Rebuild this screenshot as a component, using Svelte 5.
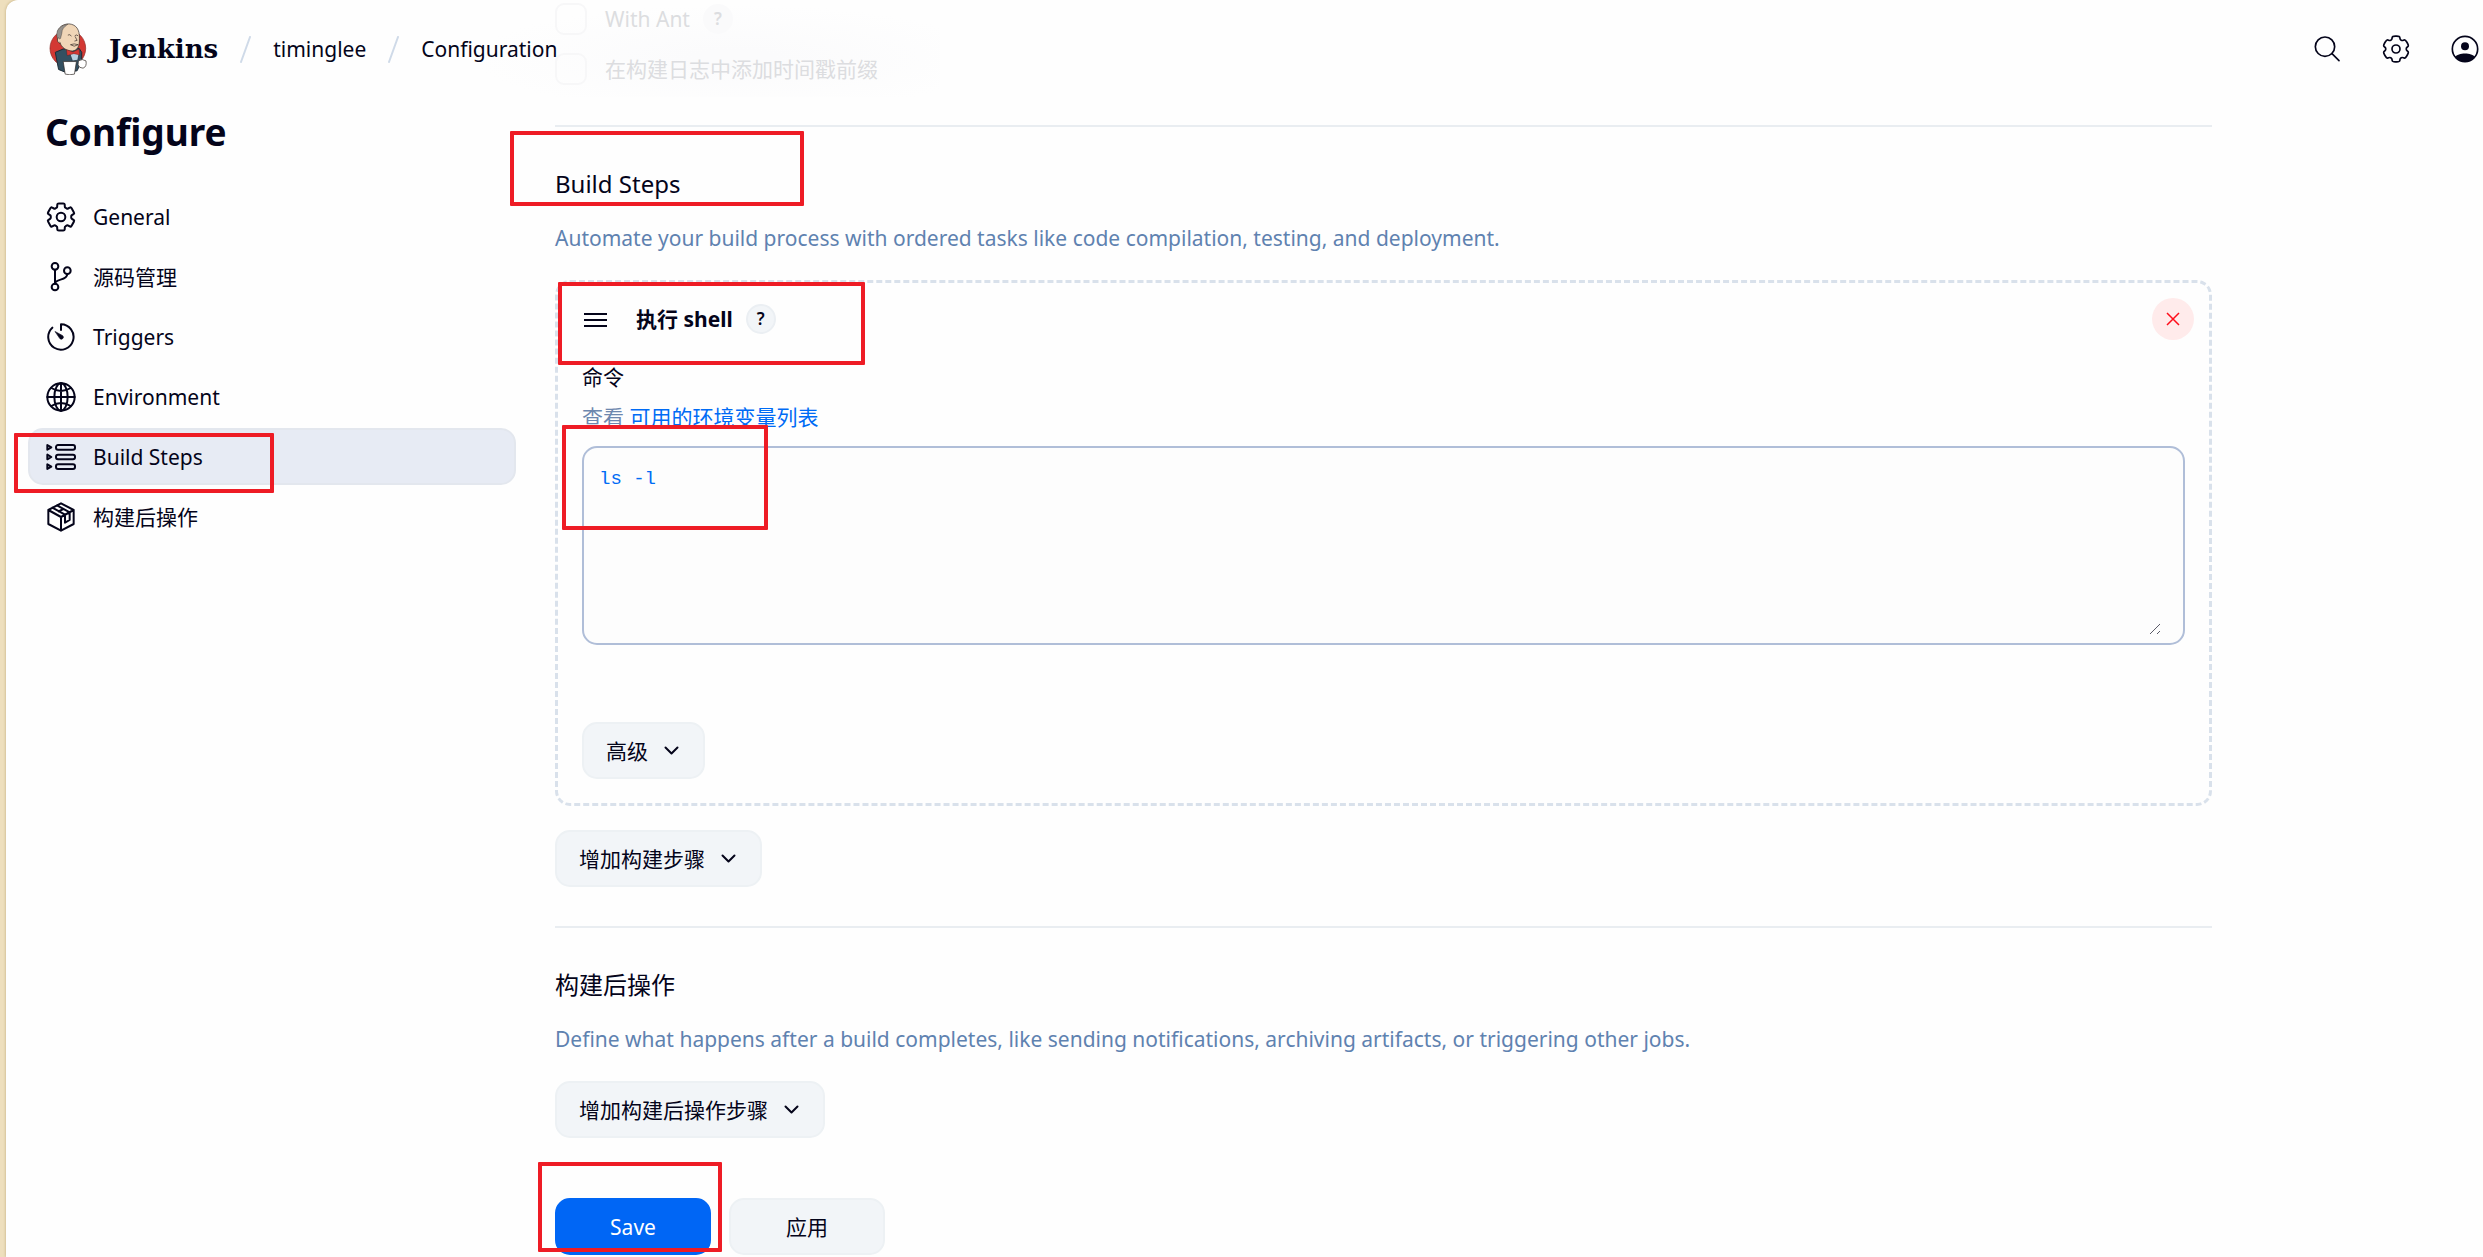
<script>
  let command = $state('ls -l');
  let withAnt = $state(false);
  let timestamps = $state(false);

  const tasks = [
    { icon: 'gear', label: 'General', id: 'general' },
    { icon: 'branch', label: '源码管理', id: 'scm' },
    { icon: 'timer', label: 'Triggers', id: 'triggers' },
    { icon: 'globe', label: 'Environment', id: 'environment' },
    { icon: 'steps', label: 'Build Steps', id: 'build-steps', active: true },
    { icon: 'cube', label: '构建后操作', id: 'post-build' }
  ];

  // Outline of a six-toothed gear around (45, 45), with rounded corners.
  function gearPath(outer, inner, outerAngle, innerAngle, round) {
    const points = [];
    for (let k = 0; k < 6; k++) {
      for (const [r, a] of [[inner, -innerAngle], [outer, -outerAngle], [outer, outerAngle], [inner, innerAngle]]) {
        const t = ((k * 60 + a) * Math.PI) / 180;
        points.push([45 + r * Math.sin(t), 45 - r * Math.cos(t)]);
      }
    }
    const mix = (p, q, f) => `${(p[0] + (q[0] - p[0]) * f).toFixed(1)} ${(p[1] + (q[1] - p[1]) * f).toFixed(1)}`;
    return (
      points
        .map((p, i) => {
          const prev = points[(i + points.length - 1) % points.length];
          const next = points[(i + 1) % points.length];
          return `${i ? 'L' : 'M'}${mix(p, prev, round)}Q${mix(p, p, 0)} ${mix(p, next, round)}`;
        })
        .join('') + 'Z'
    );
  }
  const sideGear = gearPath(42, 31, 15, 22, 0.2);
  const headGear = gearPath(40, 31, 16, 23, 0.4);
</script>

{#snippet icon(name)}
  <svg class="icon" viewBox="0 0 90 90" aria-hidden="true">
    {#if name === 'gear'}
      <path d={sideGear} />
      <circle cx="45" cy="45" r="13" />
    {:else if name === 'gear-soft'}
      <path d={headGear} />
      <circle cx="45" cy="45" r="12" />
    {:else if name === 'branch'}
      <circle cx="27" cy="13" r="10" />
      <circle cx="64" cy="26" r="10" />
      <circle cx="27" cy="75" r="10" />
      <path d="M27 23V65M64 36C63 58 28 48 27 65" />
    {:else if name === 'timer'}
      <path d="M19 17A38 38 0 1 0 45 7V24" />
      <path class="solid" d="M28 29L50 41A6 6 0 0 1 42 50Z" />
    {:else if name === 'globe'}
      <circle cx="45" cy="45" r="41" />
      <ellipse cx="45" cy="45" rx="20" ry="41" />
      <path d="M45 4V86M4 45H86M16 18Q45 36 74 18M16 72Q45 54 74 72" />
    {:else if name === 'steps'}
      <path d="M4 9V23L16 16ZM4 38V52L16 45ZM4 67V81L16 74Z" />
      <rect x="30" y="9" width="57" height="14" rx="6" />
      <rect x="30" y="38" width="57" height="14" rx="6" />
      <rect x="30" y="67" width="57" height="14" rx="6" />
    {:else if name === 'cube'}
      <path d="M45 4L83 24V66L45 86L7 66V24ZM7 24L45 45L83 24M45 45V86M19 17L57 38M33 10L71 31M57 38V62L71 54V31M26 14L38 8M38 28L52 21" />
    {:else if name === 'search'}
      <circle cx="39" cy="38" r="29" />
      <path d="M60 59L81 80" />
    {:else if name === 'user'}
      <circle cx="45" cy="45" r="38" />
      <circle class="fill" cx="45" cy="37" r="12" />
      <path class="fill" d="M15 70C24 55 66 55 75 70A39 39 0 0 1 15 70Z" />
    {/if}
  </svg>
{/snippet}

{#snippet chevron()}
  <svg class="chevron" viewBox="0 0 30 18" aria-hidden="true"><path d="M3 3L15 15L27 3" /></svg>
{/snippet}

{#snippet slash()}
  <svg class="slash" viewBox="0 0 11 27" aria-hidden="true"><path d="M1 26L10 1" /></svg>
{/snippet}

<div class="page">
  <header>
    <nav class="crumbs" aria-label="Breadcrumb">
      <a class="brand" href="#home">
        <svg class="logo" viewBox="55 36 115 156" aria-hidden="true">
          <ellipse cx="112" cy="112" rx="54" ry="55" fill="#d33833" stroke="#8a2723" stroke-width="2" />
          <path d="M74 124L98 114L146 112L154 124L154 150L140 180L104 184L84 176Z" fill="#335061" stroke="#1c2b35" stroke-width="3" />
          <path d="M82 86C74 54 92 38 116 38C138 40 148 56 147 82C148 104 142 118 126 120C106 120 92 108 88 94Z" fill="#f0d6b7" stroke="#2b2320" stroke-width="2" />
          <path d="M82 86C72 60 84 44 112 39C100 48 94 54 94 66L90 82Z" fill="#94918c" stroke="#2b2320" stroke-width="1" />
          <path d="M84 80C78 84 80 96 89 96" fill="#f0d6b7" stroke="#2b2320" stroke-width="2" />
          <path d="M112 72Q118 68 123 75M133 74Q138 69 143 74M134 76L140 88L132 90M120 101Q131 96 143 101Q131 110 120 101" fill="none" stroke="#2b2320" stroke-width="2" />
          <path d="M118 128L132 124L146 128L142 148L126 150Z" fill="#b7d0e0" stroke="#1c2b35" stroke-width="2" />
          <path d="M108 116L128 123L146 114L148 132L130 128L110 134Z" fill="#d33833" stroke="#4d1614" stroke-width="1" />
          <path d="M98 152H138L132 190Q118 194 104 190Z" fill="#fff" stroke="#2b2320" stroke-width="2" />
          <path d="M144 150Q156 142 167 150Q170 168 158 172Q146 172 143 162Z" fill="#fff" stroke="#2b2320" stroke-width="2" />
        </svg>
        <span>Jenkins</span>
      </a>
      {@render slash()}
      <a href="#timinglee">timinglee</a>
      {@render slash()}
      <a href="#configuration">Configuration</a>
    </nav>
    <div class="actions">
      <button type="button" aria-label="Search">{@render icon('search')}</button>
      <button type="button" aria-label="Manage">{@render icon('gear-soft')}</button>
      <button type="button" aria-label="User">{@render icon('user')}</button>
    </div>
  </header>

  <div class="layout">
    <aside>
      <h1>Configure</h1>
      <nav aria-label="Sections">
        {#each tasks as task}
          <a class="task" class:active={task.active} href={'#' + task.id}>
            {@render icon(task.icon)}
            <span>{task.label}</span>
          </a>
        {/each}
      </nav>
    </aside>

    <main>
      <div class="options">
        <div class="option">
          <input id="ant" type="checkbox" bind:checked={withAnt} />
          <label for="ant">With Ant</label>
          <button class="help" type="button">?</button>
        </div>
        <div class="option">
          <input id="stamps" type="checkbox" bind:checked={timestamps} />
          <label for="stamps">在构建日志中添加时间戳前缀</label>
        </div>
      </div>

      <section id="build-steps">
        <h2>Build Steps</h2>
        <p class="lead">Automate your build process with ordered tasks like code compilation, testing, and deployment.</p>

        <div class="step">
          <div class="step-head">
            <svg class="handle" viewBox="0 0 23 15" aria-hidden="true"><path d="M0 2H23M0 8H23M0 14H23" /></svg>
            <strong>执行 shell</strong>
            <button class="help" type="button">?</button>
            <button class="remove" type="button" aria-label="Remove">
              <svg viewBox="0 0 24 24" aria-hidden="true"><path d="M0 0L24 24M24 0L0 24" /></svg>
            </button>
          </div>
          <label class="field" for="command">命令</label>
          <p class="hint">查看 <a href="#env-vars">可用的环境变量列表</a></p>
          <div class="editor">
            <textarea id="command" spellcheck="false" bind:value={command}></textarea>
            <svg class="grip" viewBox="0 0 11 11" aria-hidden="true"><path d="M0 10L10 0M7 10L10 7" /></svg>
          </div>
          <button class="btn advanced" type="button">高级 {@render chevron()}</button>
        </div>

        <button class="btn" type="button">增加构建步骤 {@render chevron()}</button>
      </section>

      <section id="post-build">
        <h2>构建后操作</h2>
        <p class="lead">Define what happens after a build completes, like sending notifications, archiving artifacts, or triggering other jobs.</p>
        <button class="btn" type="button">增加构建后操作步骤 {@render chevron()}</button>
      </section>

      <div class="submit">
        <button class="btn wide primary" type="button">Save</button>
        <button class="btn wide" type="button">应用</button>
      </div>
    </main>
  </div>

  <div class="mark mark-nav"></div>
  <div class="mark mark-title"></div>
  <div class="mark mark-step"></div>
  <div class="mark mark-command"></div>
  <div class="mark mark-save"></div>
</div>

<style>
  :global(body) {
    background: #eedfbd;
    color: #04041a;
    font: 21px/30px 'Noto Sans', 'Noto Sans CJK SC', sans-serif;
  }
  :global(#app) {
    display: flow-root;
  }
  .page, .page * {
    box-sizing: border-box;
  }
  .page {
    display: grid;
    position: relative;
    min-height: 100vh;
    margin-left: 6px;
    background: #fefefe;
    border-radius: 12px 0 0 0;
    box-shadow: 0 0 3px rgba(120, 90, 20, 0.4);
  }
  a {
    color: inherit;
    text-decoration: none;
  }
  button {
    font: inherit;
    color: inherit;
    padding: 0;
    border: 0;
    background: none;
  }
  h1, h2, p {
    margin: 0;
  }
  .icon {
    width: 30px;
    height: 30px;
    flex: none;
    fill: none;
    stroke: currentColor;
    stroke-width: 5;
    stroke-linecap: round;
    stroke-linejoin: round;
  }
  aside .icon {
    stroke-width: 6;
  }
  .icon .solid {
    fill: currentColor;
    stroke-width: 2;
  }
  .icon .fill {
    fill: currentColor;
    stroke: none;
  }

  header {
    grid-area: 1 / 1;
    align-self: start;
    z-index: 1;
    display: flex;
    justify-content: space-between;
    align-items: center;
    height: 98px;
    padding: 0 3px 0 43px;
    pointer-events: none;
  }
  header a, header button {
    pointer-events: auto;
  }
  .crumbs, .brand {
    display: flex;
    align-items: center;
    gap: 22px;
  }
  .brand {
    font: bold 26px/30px 'DejaVu Serif', serif;
  }
  .logo {
    width: 38px;
    height: 52px;
  }
  .slash {
    width: 11px;
    height: 27px;
    fill: none;
    stroke: #cfdae8;
    stroke-width: 2;
    stroke-linecap: round;
  }
  .actions {
    display: flex;
    gap: 39px;
  }
  .actions button {
    display: flex;
  }

  .layout {
    grid-area: 1 / 1;
    display: grid;
    grid-template-columns: 488px minmax(0, 1657px);
    gap: 39px;
    padding: 0 24px 0 22px;
  }
  aside {
    padding-top: 108px;
  }
  h1 {
    padding-left: 17px;
    font-size: 37px;
    line-height: 48px;
  }
  aside nav {
    display: grid;
    gap: 3px;
    margin-top: 32px;
  }
  .task {
    display: flex;
    align-items: center;
    gap: 17px;
    height: 57px;
    padding: 0 16px;
    border: 2px solid transparent;
    border-radius: 15px;
  }
  .task.active {
    background: #e7ebf4;
    border-color: #e3e7ee;
  }

  .options {
    display: grid;
    gap: 18px;
    margin-left: -105px;
    padding: 3px 0 12px 105px;
    max-width: 490px;
    background: radial-gradient(ellipse at 58% 60%, #fbfbfc 10%, #fefefe 65%);
    color: #dcdde0;
  }
  .option {
    display: flex;
    align-items: center;
    height: 32px;
  }
  .option label {
    margin-left: 18px;
    white-space: nowrap;
  }
  .option input {
    appearance: none;
    flex: none;
    width: 32px;
    height: 32px;
    margin: 0;
    border: 2px solid #f7f7f8;
    border-radius: 9px;
  }
  .help {
    flex: none;
    width: 30px;
    height: 30px;
    margin-left: 13px;
    border: 2px solid #ebeff3;
    border-radius: 50%;
    background: #f2f5f8;
    font-size: 17px;
    font-weight: 600;
    line-height: 26px;
  }
  .option .help {
    border-color: #fafafb;
    background: #fafafb;
  }

  section {
    border-top: 2px solid #e9edf1;
    margin-top: 39px;
    padding-top: 42px;
  }
  .options + section {
    margin-top: 28px;
  }
  h2 {
    font-size: 24px;
    font-weight: 400;
    line-height: 30px;
  }
  .lead {
    margin: 24px 0 27px;
    color: #5f82b0;
  }
  .step {
    margin-bottom: 24px;
    padding: 15px 24px 24px;
    border: 3px dashed #d9e1eb;
    border-radius: 15px;
  }
  .step-head {
    display: flex;
    align-items: center;
    height: 42px;
    margin: 0 -9px 22px 2px;
  }
  .step-head strong {
    margin-left: 29px;
  }
  .handle {
    width: 23px;
    height: 15px;
    fill: none;
    stroke: currentColor;
    stroke-width: 2;
  }
  .remove {
    display: grid;
    place-items: center;
    width: 42px;
    height: 42px;
    margin-left: auto;
    border-radius: 50%;
    background: #ffebeb;
  }
  .remove svg {
    width: 12px;
    height: 12px;
    overflow: visible;
    stroke: #ff0d1a;
    stroke-width: 3;
  }
  .field {
    display: block;
  }
  .hint {
    margin: 10px 0 14px;
    color: #6d87ae;
  }
  .hint a {
    color: #006bf5;
  }
  .editor {
    position: relative;
  }
  textarea {
    display: block;
    width: 100%;
    height: 199px;
    margin: 0;
    padding: 16px 15px;
    border: 2px solid #b0bed8;
    border-radius: 15px;
    background: #fdfdfd;
    color: #006bf5;
    font: 19px/30px 'Liberation Mono', monospace;
    resize: none;
    outline: 0;
  }
  .grip {
    position: absolute;
    right: 24px;
    bottom: 10px;
    width: 11px;
    height: 11px;
    stroke: #5b5b68;
    stroke-width: 1;
  }
  .btn {
    display: flex;
    align-items: center;
    gap: 16px;
    height: 57px;
    padding: 0 24px 0 22px;
    border: 2px solid #edf1f4;
    border-radius: 15px;
    background: #f2f5f8;
  }
  .advanced {
    margin-top: 77px;
  }
  .chevron {
    width: 15px;
    height: 9px;
    fill: none;
    stroke: currentColor;
    stroke-width: 4;
    stroke-linecap: round;
    stroke-linejoin: round;
  }
  .submit {
    display: flex;
    gap: 18px;
    margin-top: 60px;
  }
  .wide {
    justify-content: center;
    width: 156px;
    padding: 0;
  }
  .primary {
    border-color: #0066f5;
    background: #0066f5;
    color: #fff;
  }

  /* Annotation frames drawn over the page */
  .mark {
    position: absolute;
    z-index: 2;
    border: 4px solid #ee1c25;
    border-radius: 1px;
    pointer-events: none;
  }
  .mark-nav { left: 8px; top: 433px; width: 260px; height: 60px; }
  .mark-title { left: 504px; top: 131px; width: 294px; height: 75px; }
  .mark-step { left: 552px; top: 282px; width: 307px; height: 83px; }
  .mark-command { left: 556px; top: 425px; width: 206px; height: 105px; }
  .mark-save { left: 532px; top: 1162px; width: 184px; height: 90px; }
</style>
